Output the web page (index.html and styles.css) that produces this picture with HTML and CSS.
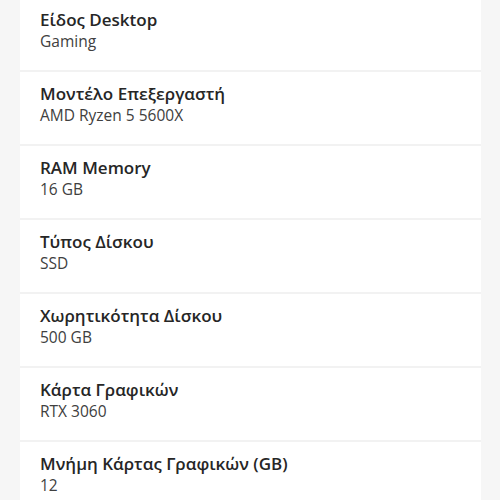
FILE: index.html
```html
<!DOCTYPE html>
<html lang="el">
<head>
    <meta charset="UTF-8">
    <meta name="viewport" content="width=device-width, initial-scale=1.0">
    <title>Χαρακτηριστικά</title>
    <link rel="stylesheet" href="styles.css">
</head>
<body>
    <div class="specs">
        <div class="spec">
            <div class="spec-name">Είδος Desktop</div>
            <div class="spec-value">Gaming</div>
        </div>
        <div class="spec">
            <div class="spec-name">Μοντέλο Επεξεργαστή</div>
            <div class="spec-value">AMD Ryzen 5 5600X</div>
        </div>
        <div class="spec">
            <div class="spec-name">RAM Memory</div>
            <div class="spec-value">16 GB</div>
        </div>
        <div class="spec">
            <div class="spec-name">Τύπος Δίσκου</div>
            <div class="spec-value">SSD</div>
        </div>
        <div class="spec">
            <div class="spec-name">Χωρητικότητα Δίσκου</div>
            <div class="spec-value">500 GB</div>
        </div>
        <div class="spec">
            <div class="spec-name">Κάρτα Γραφικών</div>
            <div class="spec-value">RTX 3060</div>
        </div>
        <div class="spec">
            <div class="spec-name">Μνήμη Κάρτας Γραφικών (GB)</div>
            <div class="spec-value">12</div>
        </div>
    </div>
</body>
</html>
```

FILE: styles.css
```css
body {
    margin: 0;
    background-color: #f6f6f6;
    font-family: "Open Sans", "Noto Sans", sans-serif;
    color: #222;
}

.specs {
    margin-left: 20px;
    width: 461px;
    margin-top: -2px;
    display: flex;
    flex-direction: column;
    gap: 2px;
    background-color: #f2f2f2;
}

.spec {
    background-color: #fff;
    height: 72px;
    padding-left: 20px;
    box-sizing: border-box;
    padding-top: 10px;
}

.spec-name {
    font-size: 17px;
    font-weight: 550;
    line-height: 23px;
    color: #262626;
}

.spec-value {
    font-size: 15.5px;
    line-height: 21px;
    color: #404040;
}
```
